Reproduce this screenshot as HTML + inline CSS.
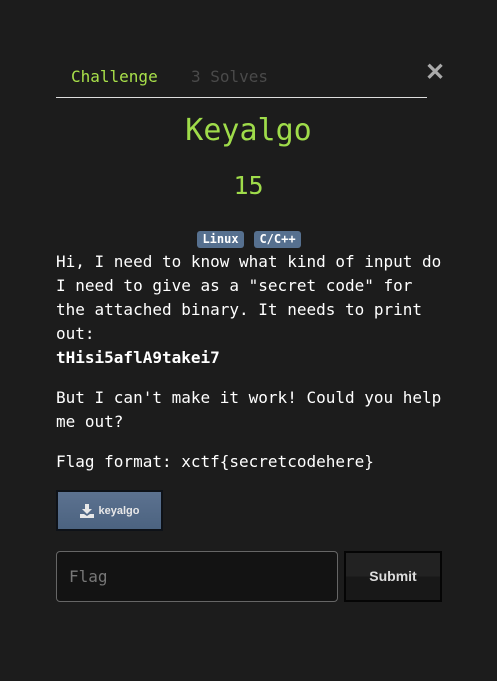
<!DOCTYPE html>
<html><head><style>
body{margin:0;width:497px;height:681px;background:#1c1c1c;overflow:hidden;font-family:"DejaVu Sans Mono","Liberation Mono",monospace;color:#fff;position:relative}
.a{position:absolute}
.tab{top:67px;font-size:16px}
.t{left:0;width:497px;text-align:center;color:#9fdc4a}
.badge{top:231px;height:17px;background:#56708f;border-radius:3px;font-size:12px;font-weight:bold;line-height:17px;text-align:center;color:#fff}
.body{left:56px;top:250px;width:392px;font-size:16px;line-height:24px}
.body p{margin:0 0 16px}
</style></head><body>
<div class="a tab" style="left:71px;color:#a8e04a">Challenge</div>
<div class="a tab" style="left:191px;color:#4a4a4a">3 Solves</div>
<div class="a" style="left:56px;top:97px;width:371px;height:1px;background:#ddd"></div>
<div class="a" style="left:425px;top:58px;font-size:24px;font-weight:bold;color:#aaa;font-family:'Liberation Sans',sans-serif">✕</div>
<div class="a t" style="top:112px;font-size:30px;line-height:38px">Keyalgo</div>
<div class="a t" style="top:171px;font-size:25px;line-height:30px">15</div>
<div class="a badge" style="left:197px;width:47px">Linux</div>
<div class="a badge" style="left:254px;width:47px">C/C++</div>
<div class="a body">
<p>Hi, I need to know what kind of input do I need to give as a "secret code" for the attached binary. It needs to print out:<br><b>tHisi5aflA9takei7</b></p>
<p>But I can't make it work! Could you help me out?</p>
<p>Flag format: xctf{secretcodehere}</p>
</div>
<div class="a" style="left:56px;top:490px;width:107px;height:41px;background:#0e1218;box-sizing:border-box;padding:2px">
<div style="width:103px;height:37px;background:linear-gradient(#5c7290,#4c6380);display:flex;align-items:center;justify-content:center;font-family:'Liberation Sans',sans-serif;font-weight:bold;font-size:11px;color:#e8e8e8">
<svg width="14" height="14" viewBox="0 0 14 14" style="margin-right:5px"><path d="M5 0h4v5h3l-5 5-5-5h3z" fill="#e8e8e8"/><path d="M0 10h4l3 2 3-2h4v4H0z" fill="#e8e8e8"/></svg>keyalgo</div></div>
<div class="a" style="left:56px;top:551px;width:282px;height:51px;box-sizing:border-box;border:1px solid #666;border-radius:4px;background:#131313;font-size:16px;color:#777;padding:15px 0 0 12px">Flag</div>
<div class="a" style="left:344px;top:551px;width:98px;height:51px;box-sizing:border-box;border:2px solid #050505;background:linear-gradient(#222 50%,#181818 50%);font-family:'Liberation Sans',sans-serif;font-weight:bold;font-size:14px;color:#ddd;text-align:center;line-height:47px">Submit</div>
</body></html>
